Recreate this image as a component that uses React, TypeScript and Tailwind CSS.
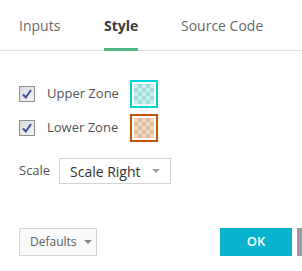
import React from 'react'

function CheckBox() {
  return (
    <div className="w-[16px] h-[16px] shrink-0 border border-[#8f8f8f] bg-[image:linear-gradient(135deg,#d8d8d8,#f6f6f6)] flex items-center justify-center">
      <svg width="12" height="12" viewBox="0 0 12 12">
        <path d="M2 6.5 L4.8 9.5 L10 2" fill="none" stroke="#3b4f9e" strokeWidth="2" />
      </svg>
    </div>
  )
}

function Swatch({ border, fill }: { border: string; fill: string }) {
  return (
    <div className={'w-[28px] h-[28px] shrink-0 border-2 p-[2px] bg-white ' + border}>
      <div className={'w-full h-full bg-[length:8px_8px] ' + fill} />
    </div>
  )
}

export default function App() {
  const tabs = ['Inputs', 'Style', 'Source Code']
  const widths = ['w-[85px]', 'w-[77px]', 'w-[100px]']

  return (
    <div className="w-[302px] h-[271px] bg-white overflow-hidden font-['Open_Sans',sans-serif] text-[#555]">
      <div className="h-[51px] border-b border-[#e0e0e0] flex pl-[19px]">
        {tabs.map((t, i) => (
          <div key={t} className={'h-[51px] -mb-px flex shrink-0 ' + widths[i]}>
            {t === 'Style' ? (
              <span className="h-full flex items-center border-b-[3px] border-[#4cb884] pt-[3px] text-[14px] font-bold text-[#3a3a3a]">
                {t}
              </span>
            ) : (
              <span className="h-full flex items-center text-[14px] text-[#6a6a6a]">{t}</span>
            )}
          </div>
        ))}
      </div>

      <div className="pl-[19px] pt-[29px] flex flex-col gap-[6px]">
        <div className="flex items-center">
          <div className="w-[111px] flex items-center gap-[12px]">
            <CheckBox />
            <span className="text-[13px]">Upper Zone</span>
          </div>
          <Swatch
            border="border-[#00d4d8]"
            fill="bg-[image:conic-gradient(#a6dcd9_25%,#c6f1ee_0_50%,#a6dcd9_0_75%,#c6f1ee_0)]"
          />
        </div>
        <div className="flex items-center">
          <div className="w-[111px] flex items-center gap-[12px]">
            <CheckBox />
            <span className="text-[13px]">Lower Zone</span>
          </div>
          <Swatch
            border="border-[#c75300]"
            fill="bg-[image:conic-gradient(#dcc0a6_25%,#f1d8c0_0_50%,#dcc0a6_0_75%,#f1d8c0_0)]"
          />
        </div>
      </div>

      <div className="pl-[19px] mt-[16px] flex items-center">
        <span className="w-[40px] text-[13px]">Scale</span>
        <div className="w-[112px] h-[26px] border border-[#d3d3d3] flex items-center justify-between pl-[10px] pr-[10px]">
          <span className="text-[14px] text-[#333]">Scale Right</span>
          <svg width="8" height="5" viewBox="0 0 8 5">
            <path d="M0 0 L8 0 L4 4 Z" fill="#a0a0a0" />
          </svg>
        </div>
      </div>

      <div className="pl-[19px] mt-[44px] flex items-center">
        <button className="w-[78px] h-[28px] shrink-0 border border-[#d6d6d6] bg-[#fafafa] flex items-center pl-[10px] gap-[7px] text-[12px] text-[#606060]">
          Defaults
          <svg width="8" height="5" viewBox="0 0 8 5">
            <path d="M0 0 L8 0 L4 4 Z" fill="#8a8a8a" />
          </svg>
        </button>
        <button className="ml-[123px] w-[72px] h-[28px] shrink-0 bg-[#0ab3cd] text-white text-[13px] font-semibold">
          OK
        </button>
        <div className="ml-[5px] w-[40px] h-[28px] shrink-0 bg-[#9a9a9f]" />
      </div>
    </div>
  )
}
